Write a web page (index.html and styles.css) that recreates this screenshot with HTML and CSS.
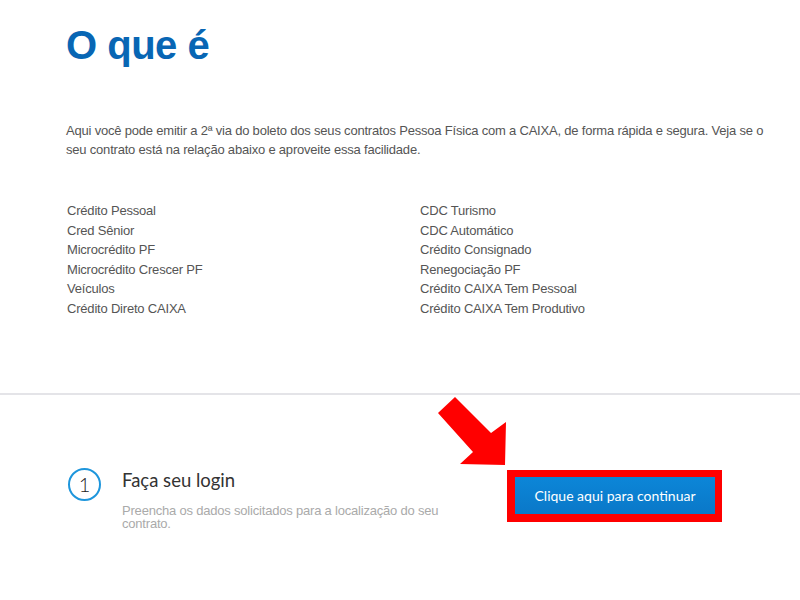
FILE: index.html
```html
<!DOCTYPE html>
<html lang="pt-BR">
<head>
    <meta charset="UTF-8">
    <title>O que é</title>
    <link rel="stylesheet" href="styles.css">
</head>
<body>
    <div class="content">
        <h1 class="page-title">O que é</h1>
        <p class="intro">Aqui você pode emitir a 2ª via do boleto dos seus contratos Pessoa Física com a CAIXA, de forma rápida e segura. Veja se o seu contrato está na relação abaixo e aproveite essa facilidade.</p>

        <div class="product-list">
            <ul>
                <li>Crédito Pessoal</li>
                <li>Cred Sênior</li>
                <li>Microcrédito PF</li>
                <li>Microcrédito Crescer PF</li>
                <li>Veículos</li>
                <li>Crédito Direto CAIXA</li>
            </ul>
            <ul>
                <li>CDC Turismo</li>
                <li>CDC Automático</li>
                <li>Crédito Consignado</li>
                <li>Renegociação PF</li>
                <li>Crédito CAIXA Tem Pessoal</li>
                <li>Crédito CAIXA Tem Produtivo</li>
            </ul>
        </div>
    </div>

    <hr class="divider">

    <div class="step">
        <div class="step-number">1</div>
        <div class="step-text">
            <h2 class="step-title">Faça seu login</h2>
            <p class="step-desc">Preencha os dados solicitados para a localização do seu contrato.</p>
        </div>
        <div class="highlight">
            <a href="#" class="btn-continue">Clique aqui para continuar</a>
        </div>
    </div>

    <!-- seta de destaque -->
    <svg class="arrow" width="80" height="80" viewBox="0 0 80 80">
        <polygon points="25,7 61,43 76,32 75,75 30,74 43,62 8,23" fill="#ff0000"/>
    </svg>
</body>
</html>
```

FILE: styles.css
```css
* {
    margin: 0;
    padding: 0;
    box-sizing: border-box;
}

body {
    position: relative;
    background: #fff;
    font-family: 'Liberation Sans', Arial, sans-serif;
    color: #555;
}

.content {
    padding: 0 30px 0 66px;
}

.page-title {
    margin-top: 25px;
    font-size: 40px;
    line-height: 40px;
    font-weight: 700;
    color: #0866b4;
    letter-spacing: -0.5px;
}

.intro {
    margin-top: 56px;
    font-size: 13px;
    line-height: 19px;
    letter-spacing: -0.2px;
}

.product-list {
    display: grid;
    grid-template-columns: 353px 1fr;
    margin-top: 42px;
    padding-left: 1px;
    font-size: 13px;
    line-height: 19.6px;
    letter-spacing: -0.2px;
}

.product-list ul {
    list-style: none;
}

.divider {
    margin-top: 74px;
    border: none;
    height: 2px;
    background: #e4e4e8;
}

.step {
    display: flex;
    align-items: flex-start;
    margin-top: 73px;
    padding-left: 68px;
}

.step-number {
    width: 33px;
    height: 33px;
    border: 2px solid #1e96dc;
    border-radius: 50%;
    display: flex;
    align-items: center;
    justify-content: center;
    font-family: 'Lato', sans-serif;
    font-weight: 300;
    font-size: 20px;
    color: #222;
}

.step-text {
    width: 320px;
    margin-left: 21px;
}

.step-title {
    font-family: 'Lato', sans-serif;
    font-weight: 400;
    font-size: 18.5px;
    line-height: 24px;
    color: #333;
}

.step-desc {
    margin-top: 12px;
    font-size: 13px;
    line-height: 13px;
    letter-spacing: -0.2px;
    color: #aaa;
}

.highlight {
    margin-top: 2px;
    margin-left: 65px;
    border: solid #ff0000;
    border-width: 7px 7px 8px 8px;
}

.btn-continue {
    display: flex;
    align-items: center;
    justify-content: center;
    width: 200px;
    height: 37px;
    background: linear-gradient(#0c86d8, #0a78c8);
    color: #fff;
    text-decoration: none;
    font-family: 'Lato', sans-serif;
    font-size: 14px;
}

.arrow {
    position: absolute;
    left: 430px;
    top: 390px;
}
```
